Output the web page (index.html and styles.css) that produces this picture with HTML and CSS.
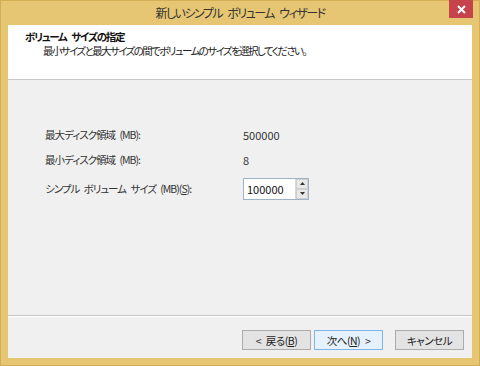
FILE: index.html
```html
<!DOCTYPE html>
<html lang="ja">
<head>
<meta charset="utf-8">
<link rel="stylesheet" href="styles.css">
</head>
<body>
<div class="window">
  <div class="titlebar">
    <div class="title">新しいシンプル ボリューム ウィザード</div>
    <div class="close"><svg width="9" height="9" viewBox="0 0 9 9"><path d="M1 1L8 8M8 1L1 8" stroke="#fff" stroke-width="2"/></svg></div>
  </div>
  <div class="client">
    <div class="header">
      <div class="h-title">ボリューム サイズの指定</div>
      <div class="h-sub">最小サイズと最大サイズの間でボリュームのサイズを選択してください。</div>
    </div>
    <div class="content">
      <div class="row"><span class="label">最大ディスク領域 (MB):</span><span class="value">500000</span></div>
      <div class="row"><span class="label">最小ディスク領域 (MB):</span><span class="value">8</span></div>
      <div class="row row-spin"><span class="label">シンプル ボリューム サイズ (MB)(<u>S</u>):</span>
        <div class="spin">
          <div class="spin-input">100000</div>
          <div class="spin-btns">
            <div class="sb"><svg width="5" height="3" viewBox="0 0 5 3"><path d="M0 3L2.5 0L5 3Z" fill="#333"/></svg></div>
            <div class="sb"><svg width="5" height="3" viewBox="0 0 5 3"><path d="M0 0L2.5 3L5 0Z" fill="#333"/></svg></div>
          </div>
        </div>
      </div>
    </div>
    <div class="footer">
      <div class="btn">&lt; 戻る(<u>B</u>)</div>
      <div class="btn btn-default">次へ(<u>N</u>) &gt;</div>
      <div class="btn btn-cancel">キャンセル</div>
    </div>
  </div>
</div>
</body>
</html>
```
FILE: styles.css
```css
html, body { margin: 0; padding: 0; }
body {
  width: 480px; height: 366px; overflow: hidden;
  font-family: "Noto Sans CJK JP", "Noto Sans", sans-serif;
  font-size: 10.5px;
  font-feature-settings: "palt";
  color: #222;
}
.window {
  box-sizing: border-box;
  width: 480px; height: 366px;
  background: #e6c672;
  border: 1px solid #d3ae55;
  display: flex; flex-direction: column;
  padding: 0 7px 7px 7px;
}
.titlebar {
  height: 24px;
  position: relative;
  display: flex; align-items: center; justify-content: center;
}
.title {
  font-size: 12px;
  letter-spacing: -1.5px;
  word-spacing: 4px;
  color: #333;
  margin-top: -1px;
}
.close {
  position: absolute;
  right: -1px; top: -1px;
  width: 24px; height: 18px;
  background: #c7434b;
  display: flex; align-items: center; justify-content: center;
}
.client {
  flex: 1;
  background: #f0f0f0;
  display: flex; flex-direction: column;
}
.header {
  height: 55px;
  background: #fff;
  border-bottom: 1px solid #c8c8c8;
  box-sizing: border-box;
  padding: 5px 0 0 17px;
}
.h-title { font-weight: bold; line-height: 14px; color: #111; letter-spacing: -1.3px; word-spacing: 4px; }
.h-sub { padding-left: 18px; line-height: 14px; color: #222; letter-spacing: -1.6px; }
.content {
  flex: 1;
  padding: 42px 0 0 37px;
  display: flex; flex-direction: column;
}
.row {
  display: flex; align-items: center;
  height: 25px;
}
.row-spin { height: 33px; }
.label { width: 198px; color: #333; letter-spacing: -1px; word-spacing: 3px; }
.value { color: #333; font-size: 11px; }
.spin {
  display: flex;
  height: 22px;
  width: 66px;
  border: 1px solid #9fb3c8;
  background: #fff;
  box-sizing: border-box;
}
.spin-input {
  flex: 1;
  padding-left: 3px;
  display: flex; align-items: center;
  color: #111;
  font-size: 11px;
}
.spin-btns {
  width: 12px;
  display: flex; flex-direction: column;
  border-left: 1px solid #d8d8d8;
}
.sb {
  flex: 1;
  background: #e8e8e8;
  border: 1px solid #cfcfcf;
  display: flex; align-items: center; justify-content: center;
}
.footer {
  height: 43px;
  border-top: 1px solid #c8c8c8;
  box-shadow: inset 0 1px 0 #fff;
  display: flex; align-items: flex-start;
  padding: 14px 0 0 234px;
  box-sizing: border-box;
}
.btn {
  width: 69px; height: 20px;
  box-sizing: border-box;
  border: 1px solid #acacac;
  background: #e3e3e3;
  display: flex; align-items: center; justify-content: center;
  color: #222;
  margin-right: 3px;
  letter-spacing: -0.5px;
  word-spacing: 3px;
}
.btn-default {
  background: #e5f1fb;
  border-color: #7eb4ea;
}
.btn-cancel { margin-left: 9px; }
```
